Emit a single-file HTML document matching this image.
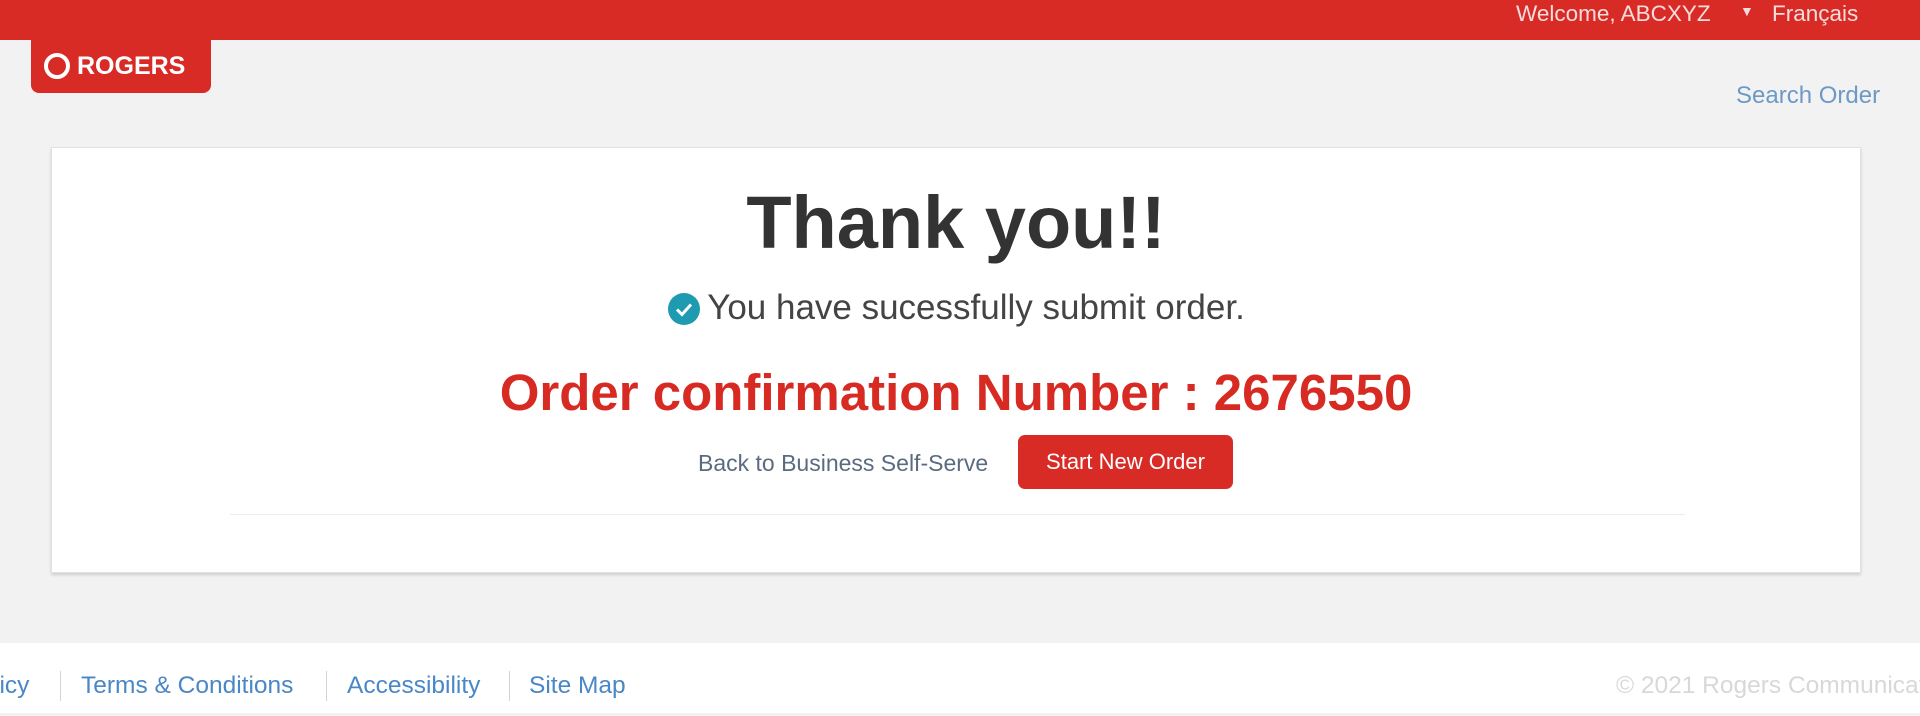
<!DOCTYPE html>
<html><head><meta charset="utf-8"><style>
*{margin:0;padding:0;box-sizing:border-box}
body{width:1920px;height:716px;background:#f3f2f2;font-family:"Liberation Sans",sans-serif;position:relative;overflow:hidden}
.top{position:absolute;left:0;top:0;width:1920px;height:40px;background:#d82b26}
.tr{position:absolute;top:1px;color:#f6dcdc;font-size:22.5px;white-space:nowrap}
.logo{position:absolute;left:31px;top:38px;width:180px;height:55px;background:#d82b26;border-radius:0 0 8px 8px;color:#fff;font-weight:bold;font-size:25px}
.logo span{position:absolute;left:46px;top:14px}
.logo svg{position:absolute;left:13px;top:15px}
.so{position:absolute;left:1736px;top:82px;color:#6c99c6;font-size:24px;white-space:nowrap}
.card{position:absolute;left:51px;top:147px;width:1810px;height:426px;background:#fff;border:1px solid #e2e2e2;box-shadow:0 2px 3px rgba(0,0,0,.15)}
.c{position:absolute;left:0;width:100%;text-align:center;white-space:nowrap}
.ty{top:32px;font-size:74px;font-weight:bold;color:#333}
.msg{top:140px;font-size:35px;color:#444}
.ord{top:215px;font-size:51px;font-weight:bold;color:#d72a23}
.back{position:absolute;left:646px;top:302px;font-size:23px;color:#5a6b80;white-space:nowrap}
.btn{position:absolute;left:966px;top:287px;width:215px;height:54px;background:#d82b26;border-radius:7px;color:#fff;font-size:22px;text-align:center;line-height:54px}
.div{position:absolute;left:178px;top:366px;width:1455px;height:1px;background:#ececec}
.foot{position:absolute;left:0;top:643px;width:1920px;height:70px;background:#fff}
.fl{position:absolute;top:29px;font-size:24.5px;color:#4a87c6;white-space:nowrap}
.sep{position:absolute;top:28px;width:1px;height:30px;background:#d4d4d4}
</style></head><body>
<div class="top"></div>
<div class="tr" style="left:1516px">Welcome, ABCXYZ</div>
<div class="tr" style="left:1740px;top:3px;font-size:14px">▼</div>
<div class="tr" style="left:1772px">Français</div>
<div class="logo"><svg width="26" height="26" viewBox="0 0 26 26"><circle cx="13" cy="13" r="11" fill="none" stroke="#fff" stroke-width="4"/><rect x="8.5" y="8.5" width="9" height="9" transform="rotate(45 13 13)" fill="#d82b26"/></svg><span>ROGERS</span></div>
<div class="so">Search Order</div>
<div class="card">
<div class="c ty">Thank you!!</div>
<div class="c msg"><svg width="34" height="34" viewBox="0 0 34 34" style="vertical-align:-7px;margin-right:6px"><circle cx="17" cy="17" r="16" fill="#1e9bb0"/><path d="M10 17.5l5 5 9-10" fill="none" stroke="#fff" stroke-width="3"/></svg>You have sucessfully submit order.</div>
<div class="c ord">Order confirmation Number : 2676550</div>
<div class="back">Back to Business Self-Serve</div>
<div class="btn">Start New Order</div>
<div class="div"></div>
</div>
<div class="foot">
<div class="fl" style="left:-6px">licy</div>
<div class="sep" style="left:60px"></div>
<div class="fl" style="left:81px">Terms &amp; Conditions</div>
<div class="sep" style="left:326px"></div>
<div class="fl" style="left:347px">Accessibility</div>
<div class="sep" style="left:509px"></div>
<div class="fl" style="left:529px">Site Map</div>
<div class="fl" style="left:1616px;color:#d8d8d8">© 2021 Rogers Communications</div>
</div>
</body></html>
